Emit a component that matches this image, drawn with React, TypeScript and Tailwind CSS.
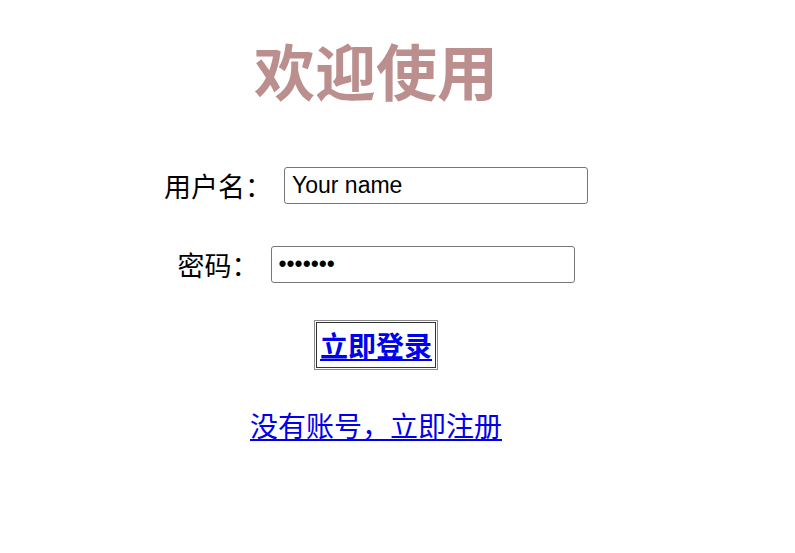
import { useState } from "react";

const CJK = "font-['Noto_Sans_CJK_SC',sans-serif]";

function Field({ label, type, value }: { label: string; type: string; value?: string }) {
  const [text, setText] = useState(value ?? "");
  return (
    <div className="flex items-center gap-[12px]">
      <span className={`${CJK} text-[27px] leading-[37px] text-black`}>{label}</span>
      <input
        type={type}
        value={text}
        onChange={(e) => setText(e.target.value)}
        className="h-[37px] w-[304px] rounded-[3px] border border-[#767676] bg-white pl-[7px] font-['Liberation_Sans',Arial,sans-serif] text-[23px] text-black outline-none"
      />
    </div>
  );
}

export default function App() {
  return (
    <div className="min-h-[553px] w-[795px] bg-white">
      <div className="flex w-[752px] flex-col items-center">
        <h1 className={`${CJK} mt-[39px] text-[61px] font-bold leading-[62px] text-[#bc8f8f]`}>欢迎使用</h1>

        <div className="mt-[66px]">
          <Field label="用户名：" type="text" value="Your name" />
        </div>
        <div className="mt-[42px]">
          <Field label="密码：" type="password" value="1234567" />
        </div>

        <div className="mt-[37px] border border-[#8a8a8a] p-px">
          <div className="flex h-[46px] w-[120px] items-center justify-center border border-[#333]">
            <a href="#" className={`${CJK} text-[28px] font-bold leading-none text-[#0000ee] underline`}>
              立即登录
            </a>
          </div>
        </div>

        <a href="#" className={`${CJK} mt-[38px] text-[28px] leading-[34px] text-[#0000ee] underline`}>
          没有账号，立即注册
        </a>
      </div>
    </div>
  );
}
